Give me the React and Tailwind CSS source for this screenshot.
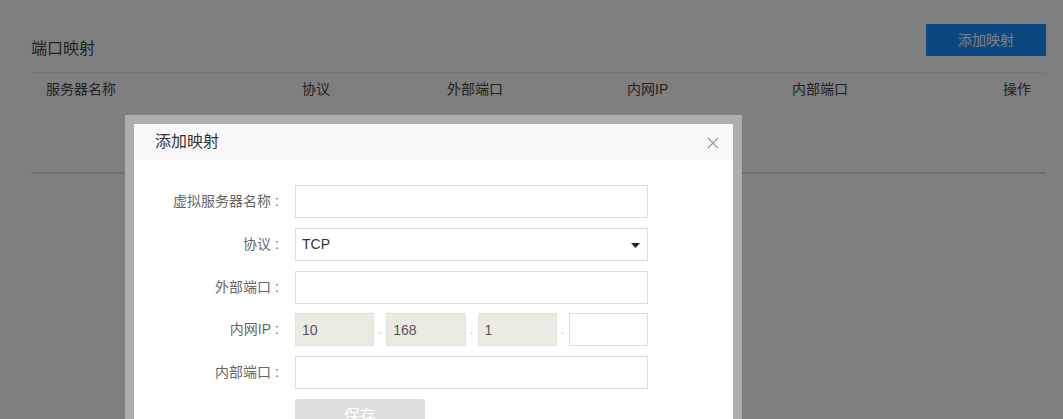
import React from "react";

const font = { fontFamily: '"Liberation Sans", "Noto Sans CJK SC", sans-serif' };

function Row({ label, children }) {
  return (
    <div className="flex items-center h-[33px]">
      <div className="w-[149px] flex justify-end text-[14px] text-[#666]">
        <span>{label}</span>
        <span className="w-[12px] text-center">:</span>
      </div>
      <div className="ml-[12px] w-[353px] h-full flex">{children}</div>
    </div>
  );
}

function TextInput({ value = "", disabled = false }) {
  return (
    <input
      readOnly
      value={value}
      className={
        "w-full h-full border text-[14px] px-[6px] outline-none " +
        (disabled ? "bg-[#ebebe4] border-[#e2e2dc] text-[#555]" : "bg-white border-[#dcdcdc] text-[#333]")
      }
      style={font}
    />
  );
}

export default function App() {
  return (
    <div className="relative w-[1063px] h-[419px] overflow-hidden bg-white" style={font}>
      {/* underlying page */}
      <div className="px-[31px] pt-[24px] pr-[17px]">
        <div className="flex items-center justify-between h-[32px]">
          <div className="text-[16px] text-[#444] pt-[17px]">端口映射</div>
          <button className="w-[120px] h-[32px] bg-[#1592ff] text-white text-[14px]">添加映射</button>
        </div>
        <div className="mt-[16px] border-t border-[#eeeeee] h-[102px] border-b-2 border-b-[#e0e0e0]">
          <div className="grid grid-cols-[256px_145px_180px_165px_1fr_auto] h-[33px] items-center text-[14px] text-[#444]">
            <div className="px-[15px]">服务器名称</div>
            <div className="px-[15px]">协议</div>
            <div className="px-[15px]">外部端口</div>
            <div className="px-[15px]">内网IP</div>
            <div className="px-[15px]">内部端口</div>
            <div className="px-[15px] text-right">操作</div>
          </div>
        </div>
      </div>

      {/* overlay */}
      <div className="absolute inset-0 bg-black/50" />

      {/* modal */}
      <div className="absolute left-[125px] top-[115px] w-[617px] border-[9px] border-[#adadad] bg-white">
        <div className="h-[36px] bg-[#f8f8f8] flex items-center justify-between pl-[21px] pr-[14px]">
          <span className="text-[16px] text-[#333]">添加映射</span>
          <svg width="12" height="12" viewBox="0 0 12 12" className="mt-[1px]">
            <path d="M1 1 L11 11 M11 1 L1 11" stroke="#9a9a9a" strokeWidth="1.2" fill="none" />
          </svg>
        </div>
        <div className="pt-[25px] pb-[20px] flex flex-col gap-[9.75px]">
          <Row label="虚拟服务器名称">
            <TextInput />
          </Row>
          <Row label="协议">
            <div className="relative w-full h-full border border-[#dcdcdc] bg-white flex items-center px-[6px] text-[14px] text-[#333]">
              TCP
              <svg width="9" height="5" viewBox="0 0 9 5" className="absolute right-[7px] top-[14px]">
                <path d="M0 0 L9 0 L4.5 5 Z" fill="#222" />
              </svg>
            </div>
          </Row>
          <Row label="外部端口">
            <TextInput />
          </Row>
          <Row label="内网IP">
            <div className="flex w-full h-full">
              <div className="flex-1"><TextInput value="10" disabled /></div>
              <span className="w-[12px] text-center text-[#bbb] text-[12px] self-center">.</span>
              <div className="flex-1"><TextInput value="168" disabled /></div>
              <span className="w-[12px] text-center text-[#bbb] text-[12px] self-center">.</span>
              <div className="flex-1"><TextInput value="1" disabled /></div>
              <span className="w-[12px] text-center text-[#bbb] text-[12px] self-center">.</span>
              <div className="flex-1"><TextInput /></div>
            </div>
          </Row>
          <Row label="内部端口">
            <TextInput />
          </Row>
          <div className="flex">
            <div className="w-[149px]" />
            <button className="ml-[12px] w-[130px] h-[34px] bg-[#dddddd] text-white text-[16px] rounded-[2px]">保存</button>
          </div>
        </div>
      </div>
    </div>
  );
}
